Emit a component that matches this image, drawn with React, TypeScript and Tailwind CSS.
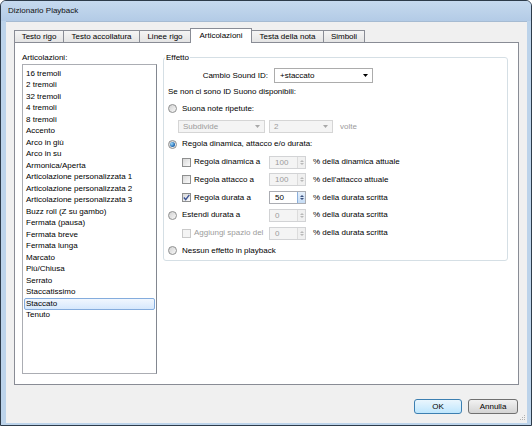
import React from 'react';

const items = [
  '16 tremoli',
  '2 tremoli',
  '32 tremoli',
  '4 tremoli',
  '8 tremoli',
  'Accento',
  'Arco in giù',
  'Arco in su',
  'Armonica/Aperta',
  'Articolazione personalizzata 1',
  'Articolazione personalizzata 2',
  'Articolazione personalizzata 3',
  'Buzz roll (Z su gambo)',
  'Fermata (pausa)',
  'Fermata breve',
  'Fermata lunga',
  'Marcato',
  'Più/Chiusa',
  'Serrato',
  'Staccatissimo',
  'Staccato',
  'Tenuto',
];

const tabs = [
  { label: 'Testo rigo', w: 'w-[50px]' },
  { label: 'Testo accollatura', w: 'w-[77px]' },
  { label: 'Linee rigo', w: 'w-[52px]' },
  { label: 'Articolazioni', w: 'w-[62px]', active: true },
  { label: 'Testa della nota', w: 'w-[73px]' },
  { label: 'Simboli', w: 'w-[42px]' },
];

function Arrow({ color = '#000' }: { color?: string }) {
  return (
    <svg width="5" height="3" viewBox="0 0 5 3" className="shrink-0">
      <path d="M0 0H5L2.5 3Z" fill={color} />
    </svg>
  );
}

function Radio({ checked }: { checked?: boolean }) {
  return (
    <span className="w-[9px] h-[9px] rounded-full border border-[#8e8f8f] bg-gradient-to-br from-[#d2d2d2] to-[#f8f8f8] flex items-center justify-center shrink-0">
      {checked && (
        <span className="w-[5px] h-[5px] rounded-full bg-[radial-gradient(circle_at_35%_35%,#9fdcff,#2a72b8_60%,#0c3f78)]" />
      )}
    </span>
  );
}

function Check({ checked, disabled }: { checked?: boolean; disabled?: boolean }) {
  return (
    <span
      className={
        disabled
          ? 'w-[9px] h-[9px] border border-[#c9c9c9] bg-[#f4f4f4] flex items-center justify-center shrink-0'
          : 'w-[9px] h-[9px] border border-[#8e8f8f] bg-gradient-to-br from-[#d8d8d8] to-[#fbfbfb] flex items-center justify-center shrink-0'
      }
    >
      {checked && (
        <svg width="7" height="7" viewBox="0 0 7 7">
          <path d="M0.8 3.6L2.7 5.6L6.3 0.9" stroke="#3c5394" strokeWidth="1.4" fill="none" />
        </svg>
      )}
    </span>
  );
}

function Spin({ value, disabled }: { value: string; disabled?: boolean }) {
  return (
    <div
      className={
        disabled
          ? 'w-[37px] h-[13px] flex border border-[#d2d3d5] bg-[#f4f4f4] text-[#9b9b9b]'
          : 'w-[37px] h-[13px] flex border border-[#abadb3] bg-white text-black'
      }
    >
      <span className="flex-1 pl-[5px] leading-[11px]">{value}</span>
      <span
        className={
          disabled
            ? 'w-[8px] flex flex-col items-center justify-center gap-[1px] border-l border-[#dcdcdc] bg-[#f0f0f0]'
            : 'w-[8px] flex flex-col items-center justify-center gap-[1px] border-l border-[#8cb0dc] bg-gradient-to-b from-[#e6f0fb] to-[#c5dcf5]'
        }
      >
        <svg width="4" height="2" viewBox="0 0 4 2">
          <path d="M0 2H4L2 0Z" fill={disabled ? '#b8b8b8' : '#3b4f7c'} />
        </svg>
        <svg width="4" height="2" viewBox="0 0 4 2">
          <path d="M0 0H4L2 2Z" fill={disabled ? '#b8b8b8' : '#3b4f7c'} />
        </svg>
      </span>
    </div>
  );
}

function Combo({ value, w }: { value: string; w: string }) {
  return (
    <div className={`${w} h-[13px] flex items-center border border-[#d5d5d5] bg-[#f4f4f4] text-[#9b9b9b] pl-[4px] pr-[4px]`}>
      <span className="flex-1">{value}</span>
      <Arrow color="#a8a8a8" />
    </div>
  );
}

export default function App() {
  return (
    <div className="w-[532px] h-[426px] flex flex-col bg-[#bcd3ea] border border-[#2d3b4a] rounded-t-[6px] overflow-hidden font-['Liberation_Sans',Arial,sans-serif] text-[8px] text-black">
      <div className="h-[20px] shrink-0 flex items-center pl-[7px] bg-gradient-to-b from-[#c6daef] to-[#b3cbe6] text-[#111]">
        Dizionario Playback
      </div>

      <div className="flex-1 ml-[5px] mr-[4px] mb-[3px] bg-[#f0f0f0] border-t border-[#a6bbd2] px-[8px] pt-[6px] flex flex-col">
        <div className="h-[14px] flex items-end">
          {tabs.map((t, i) => (
            <div
              key={t.label}
              className={
                t.active
                  ? `${t.w} h-[15px] -mb-px relative z-10 -ml-px flex items-center justify-center border border-b-0 border-[#898c95] bg-white`
                  : `${t.w} h-[12px] ${i === 0 ? '' : '-ml-px'} flex items-center justify-center border border-b-0 border-[#898c95] bg-gradient-to-b from-[#f5f5f5] to-[#e4e4e4]`
              }
            >
              {t.label}
            </div>
          ))}
        </div>

        <div className="h-[343px] border border-[#898c95] bg-white pl-[7px] pt-[9px] flex">
          <div className="w-[135px] flex flex-col">
            <div className="h-[11px] leading-[11px]">Articolazioni:</div>
            <div className="mt-[1px] h-[310px] border border-[#abadb3] border-r-[#828790] bg-white pt-[3px] px-[1px]">
              {items.map((it) => (
                <div
                  key={it}
                  className={
                    it === 'Staccato'
                      ? 'h-[11.5px] flex items-center pl-[1px] rounded-[2px] border border-[#84acdd] bg-gradient-to-b from-[#f1f7fe] to-[#d6e8fc]'
                      : 'h-[11.5px] flex items-center pl-[2px]'
                  }
                >
                  {it}
                </div>
              ))}
            </div>
          </div>

          <div className="relative ml-[6px] mt-[5px] w-[345px] h-[204px] border border-[#d5dfe5] rounded-[3px] flex flex-col">
            <span className="absolute -top-[6px] left-[1px] bg-white px-[1px] leading-[11px]">Effetto</span>

            <div className="mt-[10px] h-[15px] flex items-center">
              <span className="w-[104px] text-right">Cambio Sound ID:</span>
              <div className="ml-[6px] w-[99px] h-[15px] flex items-center border border-[#acacac] bg-white pl-[5px] pr-[4px]">
                <span className="flex-1">+staccato</span>
                <Arrow />
              </div>
            </div>

            <div className="h-[17px] flex items-center pl-[4px]">Se non ci sono ID Suono disponibili:</div>

            <div className="h-[17.75px] flex items-center pl-[4px] gap-[5px]">
              <Radio />
              <span>Suona note ripetute:</span>
            </div>

            <div className="h-[17.75px] flex items-center pl-[14px]">
              <Combo value="Subdivide" w="w-[87px]" />
              <div className="ml-[4px]">
                <Combo value="2" w="w-[64px]" />
              </div>
              <span className="ml-[7px] text-[#9b9b9b]">volte</span>
            </div>

            <div className="h-[17.75px] flex items-center pl-[4px] gap-[5px]">
              <Radio checked />
              <span>Regola dinamica, attacco e/o durata:</span>
            </div>

            <div className="h-[17.75px] flex items-center pl-[18px]">
              <div className="w-[87px] flex items-center gap-[3px]">
                <Check />
                <span>Regola dinamica a</span>
              </div>
              <Spin value="100" disabled />
              <span className="ml-[7px]">% della dinamica attuale</span>
            </div>

            <div className="h-[17.75px] flex items-center pl-[18px]">
              <div className="w-[87px] flex items-center gap-[3px]">
                <Check />
                <span>Regola attacco a</span>
              </div>
              <Spin value="100" disabled />
              <span className="ml-[7px]">% dell'attacco attuale</span>
            </div>

            <div className="h-[17.75px] flex items-center pl-[18px]">
              <div className="w-[87px] flex items-center gap-[3px]">
                <Check checked />
                <span>Regola durata a</span>
              </div>
              <Spin value="50" />
              <span className="ml-[7px]">% della durata scritta</span>
            </div>

            <div className="h-[17.75px] flex items-center pl-[4px]">
              <div className="w-[101px] flex items-center gap-[5px]">
                <Radio />
                <span>Estendi durata a</span>
              </div>
              <Spin value="0" disabled />
              <span className="ml-[7px]">% della durata scritta</span>
            </div>

            <div className="h-[17.75px] flex items-center pl-[18px]">
              <div className="w-[87px] flex items-center gap-[3px]">
                <Check disabled />
                <span className="text-[#9b9b9b]">Aggiungi spazio del</span>
              </div>
              <Spin value="0" disabled />
              <span className="ml-[7px]">% della durata scritta</span>
            </div>

            <div className="h-[17.75px] flex items-center pl-[4px] gap-[5px]">
              <Radio />
              <span>Nessun effetto in playback</span>
            </div>
          </div>
        </div>

        <div className="mt-[14px] flex justify-end gap-[6px] pr-[1px]">
          <button className="w-[48px] h-[15px] rounded-[3px] border border-[#3c7fb1] bg-gradient-to-b from-[#eaf6fd] to-[#bee6fd] text-[8px] leading-[13px]">
            OK
          </button>
          <button className="w-[50px] h-[15px] rounded-[3px] border border-[#707070] bg-gradient-to-b from-[#f2f2f2] to-[#d4d4d4] text-[8px] leading-[13px]">
            Annulla
          </button>
        </div>

        <div className="flex-1 flex justify-end items-end -mr-[8px]">
          <svg width="8" height="8" viewBox="0 0 8 8" className="mb-[1px] mr-[1px]">
            <rect x="6" y="1" width="1" height="1" fill="#b0b0b0" />
            <rect x="4" y="3" width="1" height="1" fill="#b0b0b0" />
            <rect x="6" y="3" width="1" height="1" fill="#b0b0b0" />
            <rect x="2" y="5" width="1" height="1" fill="#b0b0b0" />
            <rect x="4" y="5" width="1" height="1" fill="#b0b0b0" />
            <rect x="6" y="5" width="1" height="1" fill="#b0b0b0" />
          </svg>
        </div>
      </div>
    </div>
  );
}
